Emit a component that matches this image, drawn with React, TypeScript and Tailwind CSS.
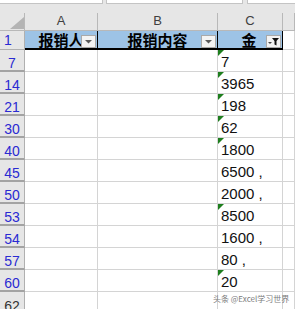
import React from "react";

const rows = [
  { n: "7", v: "7", t: true },
  { n: "14", v: "3965", t: true },
  { n: "21", v: "198", t: true },
  { n: "30", v: "62", t: true },
  { n: "40", v: "1800", t: true },
  { n: "45", v: "6500 ,", t: false },
  { n: "50", v: "2000 ,", t: false },
  { n: "53", v: "8500", t: true },
  { n: "54", v: "1600 ,", t: false },
  { n: "57", v: "80 ,", t: false },
  { n: "60", v: "20", t: true },
];

function FilterBtn({ active }: { active?: boolean }) {
  return (
    <div className="absolute right-[1px] bottom-0 w-[15px] h-[13px] bg-[#f3f3f3] border border-[#a9a9a9]">
      {active ? (
        <svg width="13" height="11" viewBox="0 0 13 11" className="block">
          <polygon points="1,6 5,6 3,8" fill="#444" />
          <polygon points="5,2 12,2 9.5,5 9.5,9.5 7.5,8.5 7.5,5" fill="#111" />
        </svg>
      ) : (
        <svg width="13" height="11" viewBox="0 0 13 11" className="block">
          <polygon points="3,4 10,4 6.5,7.5" fill="#5a5a5a" />
        </svg>
      )}
    </div>
  );
}

function GreenTri() {
  return (
    <svg width="6" height="6" viewBox="0 0 6 6" className="absolute left-0 top-0">
      <polygon points="0,0 6,0 0,6" fill="#1e7e1e" />
    </svg>
  );
}

export default function App() {
  return (
    <div className="relative w-[295px] h-[309px] overflow-hidden bg-white font-['Liberation_Sans',sans-serif]">
      {/* formula bar remnant */}
      <div className="flex h-[4px] bg-[#e6e6e6]">
        <div className="w-[103px] bg-white border-b border-r border-[#c4c4c4]" />
        <div className="w-[3px]" />
        <div className="w-[137px] bg-white border-b border-l border-r border-[#c4c4c4]" />
        <div className="w-[4px]" />
        <div className="flex-1 bg-white border-b border-l border-[#c4c4c4]" />
      </div>
      <div className="h-[9px] bg-[#e6e6e6]" />

      <div className="grid grid-cols-[25px_73px_120px_65px_12px]">
        {/* column header row */}
        <div className="relative h-[18px] bg-[#e6e6e6] border-r border-b border-[#b8b8b8]">
          <svg width="14" height="12" viewBox="0 0 14 12" className="absolute left-[10px] top-[4px]">
            <polygon points="14,0 14,12 0,12" fill="#b4b4b4" />
          </svg>
        </div>
        {["A", "B", "C", ""].map((c, i) => (
          <div
            key={i}
            className="h-[18px] bg-[#e6e6e6] border-r border-b border-[#b8b8b8] flex items-end justify-center pb-[3px] text-[13px] leading-none text-[#404040]"
          >
            {c}
          </div>
        ))}

        {/* row 1 */}
        <div className="h-[19px] bg-[#e6e6e6] border-r border-b border-[#b0b0b0] flex items-end justify-center pb-[2px] text-[14px] leading-none text-[#2a2ad2]">
          <span className="mr-[8px]">1</span>
        </div>
        <div className="relative h-[19px] bg-[#9dc3e6] border-r border-black border-b-2 flex items-center justify-center font-['Noto_Sans_CJK_SC',sans-serif] font-bold text-[15px] leading-none text-black">
          报销人
          <FilterBtn />
        </div>
        <div className="relative h-[19px] bg-[#9dc3e6] border-r border-black border-b-2 flex items-center justify-center font-['Noto_Sans_CJK_SC',sans-serif] font-bold text-[15px] leading-none text-black">
          报销内容
          <FilterBtn />
        </div>
        <div className="relative h-[19px] bg-[#9dc3e6] border-r border-black border-b-2 flex items-center justify-center font-['Noto_Sans_CJK_SC',sans-serif] font-bold text-[15px] leading-none text-black">
          <span className="mr-[2px]">金</span>
          <FilterBtn active />
        </div>
        <div className="h-[19px] border-r border-b border-[#d4d4d4]" />

        {/* data rows */}
        {rows.map((r) => (
          <React.Fragment key={r.n}>
            <div className="h-[22px] bg-[#e6e6e6] border-r border-[#b0b0b0] border-b-2 border-b-[#a3a3a3] flex items-end justify-center text-[14px] leading-none text-[#2a2ad2]">
              {r.n}
            </div>
            <div className="h-[22px] border-r border-b border-[#d4d4d4]" />
            <div className="h-[22px] border-r border-b border-[#d4d4d4]" />
            <div className="relative h-[22px] border-r border-b border-[#d4d4d4] flex items-end pl-[3px] pb-[2px] text-[15px] leading-none text-[#111] whitespace-pre">
              {r.t && <GreenTri />}
              {r.v}
            </div>
            <div className="h-[22px] border-r border-b border-[#d4d4d4]" />
          </React.Fragment>
        ))}

        {/* row 62 */}
        <div className="h-[22px] bg-[#e6e6e6] border-r border-[#b0b0b0] border-b border-b-[#b0b0b0] flex items-end justify-center text-[14px] leading-none text-[#333]">
          62
        </div>
        <div className="h-[22px] border-r border-b border-[#d4d4d4]" />
        <div className="h-[22px] border-r border-b border-[#d4d4d4]" />
        <div className="h-[22px] border-r border-b border-[#d4d4d4]" />
        <div className="h-[22px] border-r border-b border-[#d4d4d4]" />
      </div>

      {/* watermark */}
      <div className="absolute left-[213px] top-[295px] text-[8px] leading-none text-[#7c7c7c] font-['Noto_Sans_CJK_SC',sans-serif] whitespace-nowrap">
        头条 @Excel学习世界
      </div>
    </div>
  );
}
